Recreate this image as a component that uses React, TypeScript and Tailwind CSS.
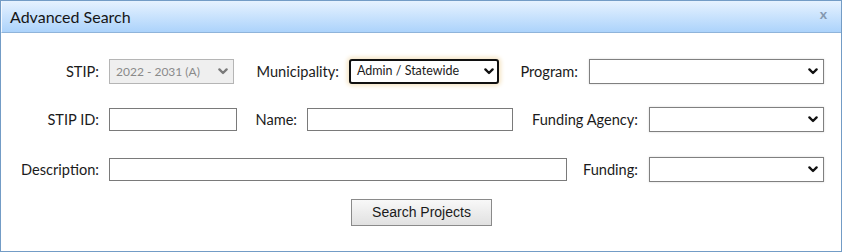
const label = "shrink-0 text-right text-[14.6px] text-[#1b1b1b] pr-[10px]";

function Chevron({ color }: { color: string }) {
  return (
    <svg width="10" height="7" viewBox="0 0 10 7" className="shrink-0">
      <polyline points="1.4,1.4 5,5 8.6,1.4" fill="none" stroke={color} strokeWidth="2.3" strokeLinecap="round" strokeLinejoin="round" />
    </svg>
  );
}

function Select({ width, value, disabled, focused }: { width: string; value?: string; disabled?: boolean; focused?: boolean }) {
  const base = "flex h-[25px] shrink-0 items-center pl-[6px]";
  const look = disabled
    ? "border border-[#b5b5b5] bg-[#efefef] text-[#8a8a8a] pr-[5px]"
    : focused
      ? "rounded-[3px] border-2 border-[#101010] bg-white text-[#1b1b1b] shadow-[0_0_4px_2px_#f5e5c6] pr-[3px]"
      : "border border-[#808080] bg-white text-[#1b1b1b] shadow-[0_0_2px_#d6d6d6] pr-[5px]";
  return (
    <div className={`${base} ${look} ${width}`}>
      <span className={`flex-1 ${disabled ? "text-[12px]" : "text-[12.5px]"}`}>{value}</span>
      <Chevron color={disabled ? "#7a7a7a" : "#111111"} />
    </div>
  );
}

function Input({ width }: { width: string }) {
  return <div className={`h-[23px] shrink-0 border border-[#7a7a7a] bg-white ${width}`} />;
}

export default function App() {
  return (
    <div className="h-[252px] w-[842px] bg-white" style={{ fontFamily: "Lato, 'Open Sans', sans-serif" }}>
      <div className="flex h-full flex-col border border-[#739cc6]">
        <div className="flex h-[32px] shrink-0 items-center justify-between border-b border-[#8fb4da] border-l border-l-[#f2f8ff] bg-gradient-to-b from-[#e6f2ff] to-[#acd3fb] pl-[8px] pr-[14px]">
          <span className="text-[16px] text-[#161616]">Advanced Search</span>
          <span className="mb-[7px] text-[14px] font-bold text-[#8498b0]">x</span>
        </div>
        <div className="flex flex-col pt-[26px]">
          <div className="flex h-[25px] items-center">
            <div className={`${label} w-[108px]`}>STIP:</div>
            <Select width="w-[125px]" value="2022 - 2031 (A)" disabled />
            <div className={`${label} w-[115px]`}>Municipality:</div>
            <Select width="w-[150px]" value="Admin / Statewide" focused />
            <div className={`${label} w-[90px] pr-[11px]`}>Program:</div>
            <Select width="w-[235px]" />
          </div>
          <div className="mt-[23px] flex h-[25px] items-center">
            <div className={`${label} w-[108px]`}>STIP ID:</div>
            <Input width="w-[128px]" />
            <div className={`${label} w-[70px]`}>Name:</div>
            <Input width="w-[206px]" />
            <div className={`${label} w-[136px] pr-[11px]`}>Funding Agency:</div>
            <Select width="w-[175px]" />
          </div>
          <div className="mt-[25px] flex h-[25px] items-center">
            <div className={`${label} w-[108px]`}>Description:</div>
            <Input width="w-[458px] h-[21px]" />
            <div className={`${label} w-[82px] pr-[11px]`}>Funding:</div>
            <Select width="w-[175px]" />
          </div>
          <div className="mt-[17px] flex justify-center pl-[1px]">
            <button
              className="h-[27px] w-[141px] border border-[#8a8a8a] bg-gradient-to-b from-[#f8f8f8] to-[#e1e1e1] text-[14px] text-[#1a1a1a]"
              style={{ fontFamily: "'Liberation Sans', Arial, sans-serif" }}
            >
              Search Projects
            </button>
          </div>
        </div>
      </div>
    </div>
  );
}
